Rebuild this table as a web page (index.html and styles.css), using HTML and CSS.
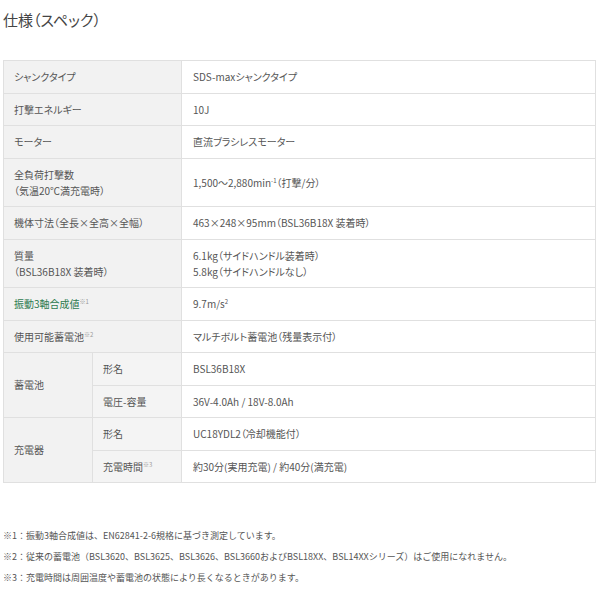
FILE: index.html
```html
<!DOCTYPE html>
<html lang="ja">
<head>
    <meta charset="UTF-8">
    <title>仕様（スペック）</title>
    <link rel="stylesheet" href="styles.css">
</head>
<body>
    <div class="spec">
        <h2 class="specTitle">仕様（スペック）</h2>

        <table class="specTable">
            <tr>
                <th colspan="2">シャンクタイプ</th>
                <td>SDS-maxシャンクタイプ</td>
            </tr>
            <tr>
                <th colspan="2">打撃エネルギー</th>
                <td>10J</td>
            </tr>
            <tr>
                <th colspan="2">モーター</th>
                <td>直流ブラシレスモーター</td>
            </tr>
            <tr>
                <th colspan="2">全負荷打撃数<br>（気温20℃満充電時）</th>
                <td>1,500～2,880min<sup>-1</sup>（打撃/分）</td>
            </tr>
            <tr>
                <th colspan="2">機体寸法（全長×全高×全幅）</th>
                <td>463×248×95mm（BSL36B18X 装着時）</td>
            </tr>
            <tr>
                <th colspan="2">質量<br>（BSL36B18X 装着時）</th>
                <td>6.1kg（サイドハンドル装着時）<br>5.8kg（サイドハンドルなし）</td>
            </tr>
            <tr>
                <th colspan="2" class="green">振動3軸合成値<sup>※1</sup></th>
                <td>9.7m/s<sup>2</sup></td>
            </tr>
            <tr>
                <th colspan="2">使用可能蓄電池<sup>※2</sup></th>
                <td>マルチボルト蓄電池（残量表示付）</td>
            </tr>
            <tr>
                <th rowspan="2" class="group">蓄電池</th>
                <th class="sub">形名</th>
                <td>BSL36B18X</td>
            </tr>
            <tr>
                <th class="sub">電圧-容量</th>
                <td>36V-4.0Ah / 18V-8.0Ah</td>
            </tr>
            <tr>
                <th rowspan="2" class="group">充電器</th>
                <th class="sub">形名</th>
                <td>UC18YDL2（冷却機能付）</td>
            </tr>
            <tr>
                <th class="sub">充電時間<sup>※3</sup></th>
                <td>約30分(実用充電) / 約40分(満充電)</td>
            </tr>
        </table>

        <ul class="notes">
            <li>※1：振動3軸合成値は、EN62841-2-6規格に基づき測定しています。</li>
            <li>※2：従来の蓄電池（BSL3620、BSL3625、BSL3626、BSL3660およびBSL18XX、BSL14XXシリーズ）はご使用になれません。</li>
            <li>※3：充電時間は周囲温度や蓄電池の状態により長くなるときがあります。</li>
        </ul>
    </div>
</body>
</html>
```

FILE: styles.css
```css
body {
    margin: 0;
    font-family: "Noto Sans CJK JP", "Noto Sans", sans-serif;
    font-feature-settings: "palt";
    color: #555;
    background: #fff;
}

.spec {
    padding: 0 4px 0 3px;
}

.specTitle {
    margin: 0;
    padding-top: 10px;
    height: 50px;
    font-size: 15px;
    font-weight: normal;
    line-height: 20px;
    color: #444;
}

.specTable {
    width: 593px;
    border-collapse: collapse;
    font-size: 10px;
    line-height: 16px;
}

.specTable th,
.specTable td {
    border: 1px solid #e0e0e0;
    padding: 8px 10px 7.5px;
    text-align: left;
    font-weight: normal;
    vertical-align: middle;
}

.specTable th {
    width: 157px;
    background: #f2f2f2;
}

.specTable th.group {
    width: 68px;
}

.specTable th.sub {
    width: 68px;
    background: #f4f4f4;
}

.specTable td {
    padding-left: 11px;
}

.green {
    color: #2d7a4f;
}

sup {
    font-size: 6px;
    line-height: 0;
    color: #999;
    vertical-align: 4px;
}

td sup {
    color: #555;
}

.notes {
    list-style: none;
    margin: 42px 0 0;
    padding: 0;
    font-size: 9px;
    font-feature-settings: normal;
    line-height: 21px;
    color: #555;
}
```
